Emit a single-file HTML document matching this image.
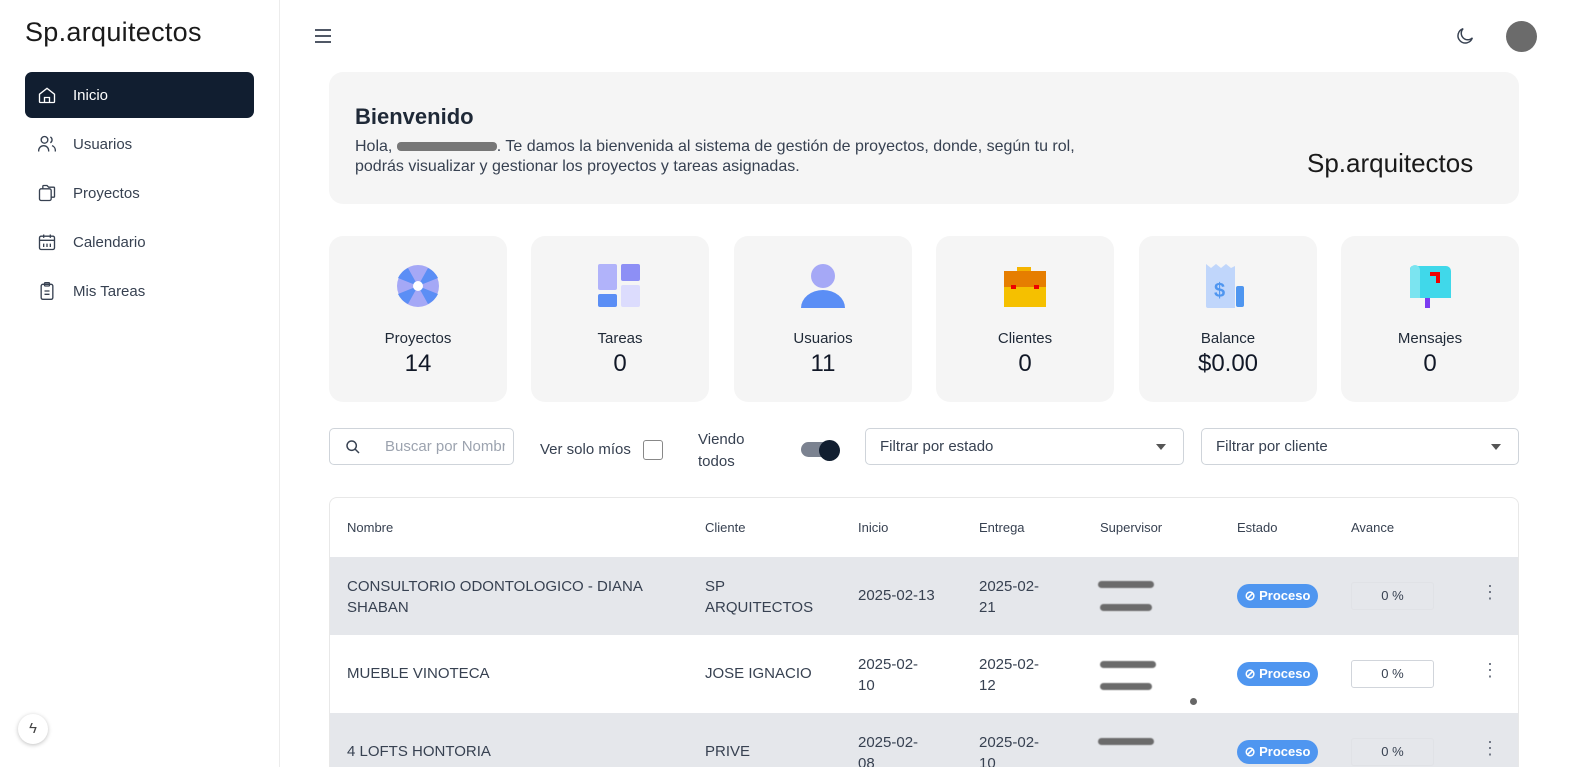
<!DOCTYPE html>
<html style="width:1581px;height:767px;overflow:hidden"><head><meta charset="utf-8"><style>
*{box-sizing:border-box;margin:0;padding:0}
body{width:1581px;height:767px;overflow:hidden;background:#fff;font-family:"Liberation Sans",sans-serif;color:#111827;position:relative}
.side{position:absolute;left:0;top:0;width:280px;height:767px;border-right:1px solid #ececec}
.logo{position:absolute;left:25px;top:17px;font-size:27px;color:#1a1a1a;letter-spacing:0.3px}
.nav{position:absolute;left:25px;width:229px;height:46px;display:flex;align-items:center;font-size:15px;color:#374151}
.nav svg{margin-left:12px;margin-right:16px}
.nav.act{background:#111e30;color:#fff;border-radius:7px}
.card{position:absolute;background:#f5f5f5;border-radius:14px}
.stat{top:236px;width:178px;height:166px;text-align:center}
.stat .ic{position:absolute;left:67px;top:28px;width:44px;height:44px}
.stat .l{position:absolute;top:94px;width:100%;font-size:15px;color:#1f2937}
.stat .v{position:absolute;top:114px;width:100%;font-size:24px;color:#111827}
.inp{position:absolute;border:1px solid #cfd4da;border-radius:5px;height:37px;top:428px;font-size:15px;color:#374151}
.th{position:absolute;top:520px;font-size:13px;color:#374151}
.row{position:absolute;left:330px;width:1188px;height:78px;font-size:15px;color:#374151;overflow:hidden}
.row div{position:absolute}
.badge{background:#4f96f0;color:#fff;border-radius:12px;font-size:13px;font-weight:bold;height:24px;width:81px;line-height:24px;text-align:center}
.pct{width:83px;height:28px;border:1px solid #e0e2e6;border-radius:3px;text-align:center;line-height:26px;font-size:13px}
.blur{background:#6b6b6b;height:7px;border-radius:4px;filter:blur(0.6px)}
.dots{font-size:18px;color:#6b7280;line-height:6px;width:6px;text-align:center}
</style></head><body>
<div class="side">
<div class="logo">Sp.arquitectos</div>
<div class="nav act" style="top:72px"><svg width="20" height="20" viewBox="0 0 24 24" fill="none" stroke="#fff" stroke-width="1.6"><path d="M3 11l9-7 9 7v9a1 1 0 0 1-1 1H4a1 1 0 0 1-1-1z"/><path d="M9 21v-6h6v6"/></svg>Inicio</div>
<div class="nav" style="top:121px"><svg width="20" height="20" viewBox="0 0 24 24" fill="none" stroke="#374151" stroke-width="1.6"><circle cx="9" cy="7" r="4"/><path d="M2 21v-1a6 6 0 0 1 12 0v1M16 3.5a4 4 0 0 1 0 7M18 14a6 6 0 0 1 4 6v1"/></svg>Usuarios</div>
<div class="nav" style="top:170px"><svg width="20" height="20" viewBox="0 0 24 24" fill="none" stroke="#374151" stroke-width="1.6"><rect x="3" y="7" width="14" height="14" rx="2"/><path d="M7 7V4a1 1 0 0 1 1-1h4l2 2h6a1 1 0 0 1 1 1v10a1 1 0 0 1-1 1h-3"/></svg>Proyectos</div>
<div class="nav" style="top:219px"><svg width="20" height="20" viewBox="0 0 24 24" fill="none" stroke="#374151" stroke-width="1.6"><rect x="3" y="5" width="18" height="16" rx="2"/><path d="M3 10h18M8 3v4M16 3v4M8 14v4M12 14v4M16 14v4"/></svg>Calendario</div>
<div class="nav" style="top:268px"><svg width="20" height="20" viewBox="0 0 24 24" fill="none" stroke="#374151" stroke-width="1.6"><rect x="5" y="4" width="14" height="18" rx="2"/><rect x="9" y="2" width="6" height="4" rx="1"/><path d="M9 12h6M9 16h6"/></svg>Mis Tareas</div>
<div style="position:absolute;left:18px;top:714px;width:30px;height:30px;border-radius:50%;background:#fff;box-shadow:0 1px 4px rgba(0,0,0,.25);text-align:center;line-height:30px;font-size:15px;color:#444">ϟ</div>
</div>
<svg style="position:absolute;left:314px;top:28px" width="18" height="16" viewBox="0 0 18 16" stroke="#374151" stroke-width="1.8"><path d="M1 2h16M1 8h16M1 14h16"/></svg>
<svg style="position:absolute;left:1454px;top:25px" width="22" height="22" viewBox="0 0 24 24" fill="none" stroke="#374151" stroke-width="1.6"><path d="M20 14A8 8 0 1 1 10 4a7 7 0 0 0 10 10z"/></svg>
<div style="position:absolute;left:1506px;top:21px;width:31px;height:31px;border-radius:50%;background:#6b6b6b"></div>

<div class="card" style="left:329px;top:72px;width:1190px;height:132px">
<div style="position:absolute;left:26px;top:32px;font-size:22px;font-weight:bold;color:#1f2937">Bienvenido</div>
<div style="position:absolute;left:26px;top:65px;width:760px;font-size:16px;line-height:20px;color:#374151">Hola, <span style="display:inline-block;width:100px;height:9px;background:#777;border-radius:4px;vertical-align:middle"></span>. Te damos la bienvenida al sistema de gestión de proyectos, donde, según tu rol, podrás visualizar y gestionar los proyectos y tareas asignadas.</div>
<div style="position:absolute;left:978px;top:76px;font-size:26px;color:#1a1a1a">Sp.arquitectos</div>
</div>

<div class="card stat" style="left:329px"><svg class="ic" viewBox="0 0 44 44"><circle cx="22" cy="22" r="21" fill="#a5a8f6"/><path d="M22 22L12 4A21 21 0 0 0 2 14zM22 22L42 14A21 21 0 0 0 32 4zM22 22L2 30A21 21 0 0 0 12 40zM22 22L32 40A21 21 0 0 0 42 30z" fill="#5b8ef5"/><circle cx="22" cy="22" r="5" fill="#fff"/></svg><div class="l">Proyectos</div><div class="v">14</div></div>
<div class="card stat" style="left:531px"><svg class="ic" viewBox="0 0 44 44"><rect x="0" y="0" width="19" height="26" rx="2" fill="#b1b3fa"/><rect x="23" y="0" width="19" height="17" rx="2" fill="#8d8ff5"/><rect x="0" y="30" width="19" height="13" rx="2" fill="#5b8ef5"/><rect x="23" y="21" width="19" height="22" rx="2" fill="#dcdcfd"/></svg><div class="l">Tareas</div><div class="v">0</div></div>
<div class="card stat" style="left:734px"><svg class="ic" viewBox="0 0 44 44"><ellipse cx="22" cy="12" rx="12" ry="12" fill="#a5a8f6"/><path d="M0 44a22 18 0 0 1 44 0z" fill="#5b8ef5"/></svg><div class="l">Usuarios</div><div class="v">11</div></div>
<div class="card stat" style="left:936px"><svg class="ic" viewBox="0 0 44 44"><rect x="14" y="3" width="14" height="5" fill="#f5b400"/><rect x="1" y="7" width="42" height="36" fill="#f5c000"/><rect x="1" y="7" width="42" height="16" fill="#e67e00"/><rect x="8" y="21" width="5" height="4" fill="#e00"/><rect x="31" y="21" width="5" height="4" fill="#e00"/></svg><div class="l">Clientes</div><div class="v">0</div></div>
<div class="card stat" style="left:1139px"><svg class="ic" viewBox="0 0 44 44"><path d="M0 0l5 4 5-4 5 4 5-4 5 4 4-2v42H2a2 2 0 0 1-2-2z" fill="#c0d6fb"/><rect x="30" y="22" width="8" height="21" rx="2" fill="#4f96f0"/><text x="8" y="33" font-size="20" font-weight="bold" fill="#4f96f0" font-family="Liberation Sans">$</text></svg><div class="l">Balance</div><div class="v">$0.00</div></div>
<div class="card stat" style="left:1341px"><svg class="ic" viewBox="0 0 44 44"><path d="M4 2h34a5 5 0 0 1 5 5v27H2V6a4 4 0 0 1 2-4z" fill="#40d8ea"/><path d="M2 6a5 5 0 0 1 10 0v28H2z" fill="#7be4f0"/><rect x="22" y="8" width="10" height="4" fill="#e00"/><rect x="28" y="8" width="4" height="11" fill="#e00"/><rect x="17" y="34" width="5" height="10" fill="#7b3cf0"/></svg><div class="l">Mensajes</div><div class="v">0</div></div>

<div class="inp" style="left:329px;width:185px"><svg style="position:absolute;left:15px;top:10px" width="16" height="16" viewBox="0 0 24 24" fill="none" stroke="#374151" stroke-width="2.2"><circle cx="10" cy="10" r="7"/><path d="M15 15l6 6"/></svg><span style="position:absolute;left:55px;top:9px;color:#9ca3af;white-space:nowrap;width:120px;overflow:hidden">Buscar por Nombre</span></div>
<div style="position:absolute;left:540px;top:441px;font-size:15px;color:#374151">Ver solo míos</div>
<div style="position:absolute;left:643px;top:440px;width:20px;height:20px;border:1.5px solid #888;border-radius:3px"></div>
<div style="position:absolute;left:698px;top:429px;font-size:15px;line-height:22px;color:#374151">Viendo<br>todos</div>
<div style="position:absolute;left:801px;top:442px;width:36px;height:15px;border-radius:8px;background:#7b8290"></div>
<div style="position:absolute;left:819px;top:440px;width:21px;height:21px;border-radius:50%;background:#111e30"></div>
<div class="inp" style="left:865px;width:319px"><span style="position:absolute;left:14px;top:9px">Filtrar por estado</span><span style="position:absolute;right:17px;top:15px;border:5px solid transparent;border-top:6px solid #555"></span></div>
<div class="inp" style="left:1201px;width:318px"><span style="position:absolute;left:14px;top:9px">Filtrar por cliente</span><span style="position:absolute;right:17px;top:15px;border:5px solid transparent;border-top:6px solid #555"></span></div>

<div style="position:absolute;left:329px;top:497px;width:1190px;height:270px;border:1px solid #e8e8e8;border-bottom:none;border-radius:8px 8px 0 0"></div>
<div class="th" style="left:347px">Nombre</div><div class="th" style="left:705px">Cliente</div><div class="th" style="left:858px">Inicio</div><div class="th" style="left:979px">Entrega</div><div class="th" style="left:1100px">Supervisor</div><div class="th" style="left:1237px">Estado</div><div class="th" style="left:1351px">Avance</div>

<div class="row" style="top:557px;background:#e5e7eb">
<div style="left:17px;top:19px;line-height:21px">CONSULTORIO ODONTOLOGICO - DIANA<br>SHABAN</div>
<div style="left:375px;top:19px;line-height:21px">SP<br>ARQUITECTOS</div>
<div style="left:528px;top:30px">2025-02-13</div>
<div style="left:649px;top:19px;line-height:21px">2025-02-<br>21</div>
<div class="blur" style="left:768px;top:24px;width:56px"></div><div class="blur" style="left:770px;top:47px;width:52px"></div>
<div class="badge" style="left:907px;top:27px">⊘ Proceso</div>
<div class="pct" style="left:1021px;top:25px">0 %</div>
<div class="dots" style="left:1151px;top:32px">⋮</div>
</div>
<div class="row" style="top:635px;background:#fff">
<div style="left:17px;top:30px">MUEBLE VINOTECA</div>
<div style="left:375px;top:30px">JOSE IGNACIO</div>
<div style="left:528px;top:19px;line-height:21px">2025-02-<br>10</div>
<div style="left:649px;top:19px;line-height:21px">2025-02-<br>12</div>
<div class="blur" style="left:770px;top:26px;width:56px"></div><div class="blur" style="left:770px;top:48px;width:52px"></div>
<div style="left:860px;top:63px;width:7px;height:7px;border-radius:50%;background:#666"></div>
<div class="badge" style="left:907px;top:27px">⊘ Proceso</div>
<div class="pct" style="left:1021px;top:25px;border-color:#d1d5db">0 %</div>
<div class="dots" style="left:1151px;top:32px">⋮</div>
</div>
<div class="row" style="top:713px;height:54px;background:#e5e7eb">
<div style="left:17px;top:30px">4 LOFTS HONTORIA</div>
<div style="left:375px;top:30px">PRIVE</div>
<div style="left:528px;top:19px;line-height:21px">2025-02-<br>08</div>
<div style="left:649px;top:19px;line-height:21px">2025-02-<br>10</div>
<div class="blur" style="left:768px;top:25px;width:56px"></div>
<div class="badge" style="left:907px;top:27px">⊘ Proceso</div>
<div class="pct" style="left:1021px;top:25px">0 %</div>
<div class="dots" style="left:1151px;top:32px">⋮</div>
</div>
</body></html>
